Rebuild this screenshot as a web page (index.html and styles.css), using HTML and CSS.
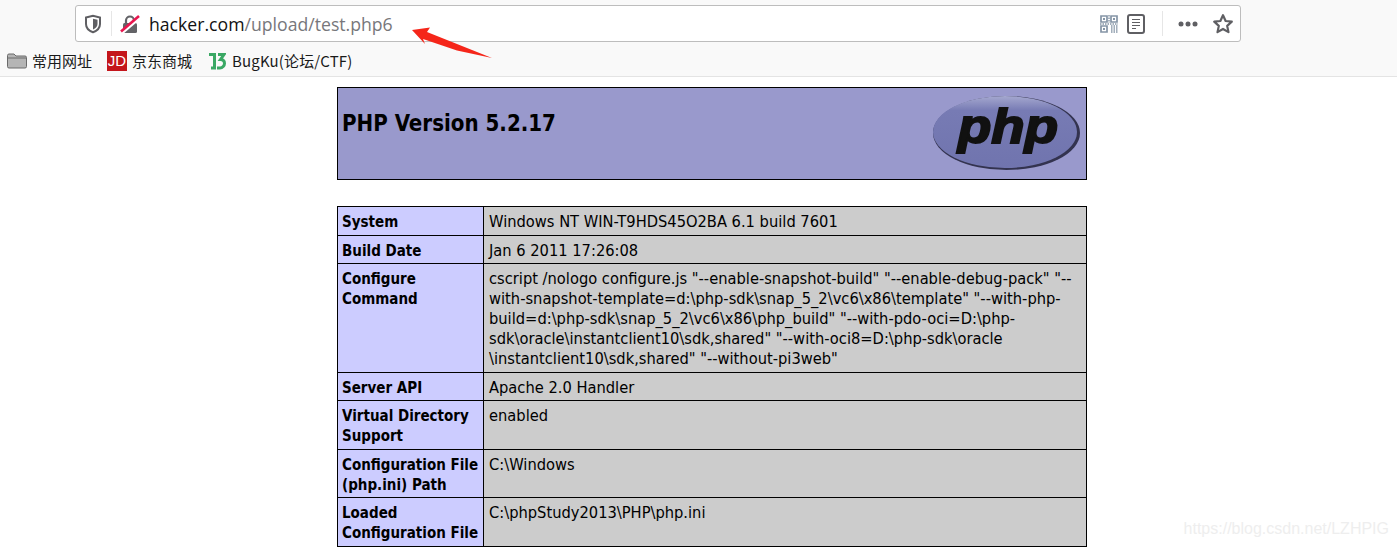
FILE: index.html
```html
<!DOCTYPE html>
<html lang="en">
<head>
    <meta charset="UTF-8">
    <title>phpinfo()</title>
    <link rel="stylesheet" href="styles.css">
</head>
<body>
    <div class="browser">
        <div class="urlbar">
            <svg class="shield" width="18" height="20" viewBox="0 0 18 20"><path d="M2 3.500 9 1.800l7 1.700V10c0 4-3 6.800-7 8.200C5 16.800 2 14 2 10Z" fill="none" stroke="#5f5f63" stroke-width="2"/><path d="M9 4.800l4.500 1V10c0 2.500-1.800 4.300-4.500 5.400Z" fill="#5f5f63"/></svg>
            <span class="sep"></span>
            <svg class="lock" width="20" height="20" viewBox="0 0 20 20"><rect x="3" y="9" width="14" height="10" rx="1.500" fill="#636367"/><path d="M6 9V6.500a4 4 0 0 1 8 0V9" fill="none" stroke="#636367" stroke-width="2.200"/><path d="M1 19.500 19 4" stroke="#fff" stroke-width="3.500"/><path d="M1 17.500 19 2" stroke="#e8174f" stroke-width="2.600"/></svg>
            <div class="url">hacker.com<span class="url-path">/upload/test.php6</span></div>
            <svg class="qr" width="18" height="18" viewBox="0 0 18 18" fill="none" stroke="#8595a6"><path d="M1 1h6v6H1ZM11 1h6v6h-6ZM1 11h6v6H1Z" stroke-width="1.700"/><path d="M3 3h2v2H3ZM13 3h2v2h-2ZM3 13h2v2H3Z" fill="#8595a6" stroke="none"/><path d="M0 9h18M9 0v8M11 11h7M11 13h7M11 15h7M11 17h7" stroke-width="1.400" stroke-dasharray="1.500 1"/></svg>
            <svg class="reader" width="18" height="20" viewBox="0 0 18 20" fill="none" stroke="#5f5f63"><rect x="1" y="1" width="16" height="18" rx="2" stroke-width="2"/><path d="M5 5.500h8M5 8.500h8M5 11.500h8M5 14.500h4" stroke-width="1.200"/></svg>
            <span class="sep sep-right"></span>
            <svg class="more" width="20" height="6" viewBox="0 0 20 6" fill="#5f5f63"><circle cx="3" cy="3" r="2.500"/><circle cx="10" cy="3" r="2.500"/><circle cx="17" cy="3" r="2.500"/></svg>
            <svg class="star" width="22" height="22" viewBox="0 0 20 20"><path d="M10 2l2.400 5.300 5.600.6-4.200 3.800 1.200 5.700-5-2.900-5 2.900 1.200-5.700L2 7.900l5.600-.6Z" fill="none" stroke="#5f5f63" stroke-width="2" stroke-linejoin="round"/></svg>
        </div>
        <div class="bookmarks">
            <div class="bookmark">
                <svg width="20" height="16" viewBox="0 0 20 16"><path d="M.5 2.500q0-1.500 1.500-1.500h5l2 2h9q1.500 0 1.500 1.500v9q0 1.500-1.500 1.500H2q-1.500 0-1.500-1.500Z" fill="#b5b5b5" stroke="#6a6a6a"/><path d="M1 5h18" stroke="#6a6a6a"/></svg>
                <span>常用网址</span>
            </div>
            <div class="bookmark">
                <span class="jd-icon">JD</span>
                <span>京东商城</span>
            </div>
            <div class="bookmark bookmark-bugku">
                <svg width="18" height="18" viewBox="0 0 18 18" fill="none" stroke="#3aa864" stroke-width="3"><path d="M1 2.500h5.500V16H3M10 2.500h6l-3.500 5c3 0 4 2 4 4s-2 4.500-4.500 4.500H9"/></svg>
                <span>BugKu(论坛/CTF)</span>
            </div>
        </div>
    </div>

    <svg class="arrow" width="84" height="36" viewBox="0 0 84 36"><path d="M2 5 20 2.500 17 7l65 26-35-7.500L13 14l2 5Z" fill="#f5261a"/></svg>

    <div class="center">
        <table class="info header-table">
            <tr class="h">
                <td>
                    <svg class="php-logo" width="150" height="80" viewBox="0 0 150 80">
                        <defs>
                            <linearGradient id="logoFill" x1="0" y1="0" x2="0" y2="1">
                                <stop offset="0" stop-color="#a5a8cf"/>
                                <stop offset=".2" stop-color="#777bb4"/>
                                <stop offset="1" stop-color="#7074ae"/>
                            </linearGradient>
                        </defs>
                        <ellipse cx="74.500" cy="39" rx="73.500" ry="37" fill="#33334f"/>
                        <ellipse cx="73" cy="38" rx="72" ry="36" fill="url(#logoFill)"/>
                        <text class="php-text" x="26" y="49" textLength="100" lengthAdjust="spacingAndGlyphs">php</text>
                    </svg>
                    <h1>PHP Version 5.2.17</h1>
                </td>
            </tr>
        </table>

        <table class="info data-table">
            <tr><td class="e">System</td><td class="v">Windows NT WIN-T9HDS45O2BA 6.1 build 7601</td></tr>
            <tr><td class="e">Build Date</td><td class="v">Jan 6 2011 17:26:08</td></tr>
            <tr><td class="e">Configure Command</td><td class="v">cscript /nologo configure.js "--enable-snapshot-build" "--enable-debug-pack" "--<br>with-snapshot-template=d:\php-sdk\snap_5_2\vc6\x86\template" "--with-php-<br>build=d:\php-sdk\snap_5_2\vc6\x86\php_build" "--with-pdo-oci=D:\php-<br>sdk\oracle\instantclient10\sdk,shared" "--with-oci8=D:\php-sdk\oracle<br>\instantclient10\sdk,shared" "--without-pi3web"</td></tr>
            <tr><td class="e">Server API</td><td class="v">Apache 2.0 Handler</td></tr>
            <tr><td class="e">Virtual Directory Support</td><td class="v">enabled</td></tr>
            <tr><td class="e">Configuration File (php.ini) Path</td><td class="v">C:\Windows</td></tr>
            <tr><td class="e">Loaded Configuration File</td><td class="v">C:\phpStudy2013\PHP\php.ini</td></tr>
        </table>
    </div>

    <div class="watermark">https://blog.csdn.net/LZHPIG</div>
</body>
</html>
```

FILE: styles.css
```css
html, body {
    height: 100%;
}
body {
    margin: 0;
    position: relative;
    overflow: hidden;
    background-color: #fff;
    color: #000;
    font-family: "DejaVu Sans", sans-serif;
}
.browser {
    height: 71px;
    padding-top: 5px;
    background-color: #f9f9f9;
    border-bottom: 1px solid #e4e4e4;
}
.urlbar {
    display: flex;
    align-items: center;
    box-sizing: border-box;
    width: 1166px;
    height: 37px;
    margin-left: 75px;
    padding: 0 6px 0 8px;
    background-color: #fff;
    border: 1px solid #bdbdbd;
    border-radius: 3px;
}
.sep {
    width: 1px;
    height: 25px;
    margin-left: 9px;
    background-color: #e6e6e6;
}
.sep-right {
    margin-left: 17px;
}
.lock {
    margin-left: 8px;
}
.url {
    flex: 1;
    margin-left: 9px;
    font-family: "Open Sans", sans-serif;
    font-size: 17.65px;
    color: #111;
}
.url-path {
    color: #77777b;
}
.reader {
    margin-left: 9px;
}
.more {
    margin-left: 15px;
}
.star {
    margin-left: 14px;
}
.bookmarks {
    display: flex;
    align-items: center;
    height: 34px;
    padding: 3px 0 0 7px;
    box-sizing: border-box;
    gap: 15px;
    font-family: "Noto Sans CJK SC", sans-serif;
    font-size: 15px;
    color: #1a1a1a;
}
.bookmark {
    display: flex;
    align-items: center;
    gap: 5px;
}
.bookmark-bugku {
    gap: 6px;
    margin-left: 1px;
    letter-spacing: .15px;
}
.jd-icon {
    width: 20px;
    height: 20px;
    background-color: #c4161c;
    color: #fff;
    font-family: "Liberation Sans", sans-serif;
    font-size: 15px;
    line-height: 20px;
    text-align: center;
}
.arrow {
    position: absolute;
    left: 410px;
    top: 25px;
}
.center {
    width: 750px;
    margin: 10px 0 0 337px;
}
.info {
    width: 750px;
    table-layout: fixed;
    border-collapse: collapse;
    font-family: "DejaVu Sans Condensed", "DejaVu Sans", sans-serif;
    font-stretch: condensed;
    font-size: 16.32px;
    line-height: 20px;
}
.info td {
    border: 1px solid #000;
    padding: 5px 2px 2.5px 4px;
    vertical-align: top;
}
.header-table {
    margin-bottom: 26px;
}
.info .h td {
    height: 92px;
    box-sizing: border-box;
    padding: 0 4px;
    background-color: #9999cc;
}
.h h1 {
    margin: 20px 0 0;
    font-size: 22.1px;
    line-height: 30px;
}
.php-logo {
    float: right;
    margin: 6px 0 0;
}
.php-text {
    font-family: "Liberation Sans", sans-serif;
    font-size: 48px;
    font-weight: bold;
    font-style: italic;
    fill: #111;
    stroke: #111;
    stroke-width: 2px;
}
.e {
    width: 139px;
    background-color: #ccccff;
    font-weight: bold;
    font-size: 15px;
}
.v {
    background-color: #cccccc;
}
.data-table .v {
    padding-left: 5px;
}
.watermark {
    position: absolute;
    right: 8px;
    top: 520px;
    font-family: "Liberation Sans", sans-serif;
    font-size: 16px;
    color: #eeeeee;
}
```
